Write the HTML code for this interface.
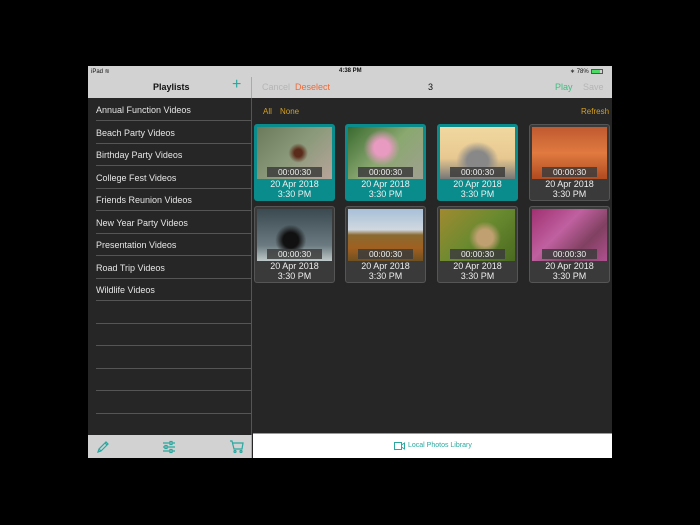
<!DOCTYPE html><html><head><style>
*{margin:0;padding:0;box-sizing:border-box}
body{width:700px;height:525px;background:#000;position:relative;overflow:hidden;font-family:"Liberation Sans",sans-serif}
.a{position:absolute}
.row{position:absolute;left:0;width:164px;height:22.5px;color:#e6e6e6;font-size:9px;padding:7px 0 0 8px}
.sep{position:absolute;left:8px;right:0;height:1px;background:#555}
.tile{position:absolute;width:81px;height:77px;border-radius:3px;border:1px solid #555;background:#3a3a3a}
.tile.s{background:#0a8c8c;border-color:#0a8c8c}
.img{position:absolute;left:2px;top:2px;width:75px;height:52px}
.dur{position:absolute;left:12px;top:42px;width:55px;height:10px;background:rgba(60,60,60,.85);color:#eee;font-size:8.5px;text-align:center;line-height:10px}
.dt{position:absolute;left:0;width:79px;text-align:center;color:#eee;font-size:9px}
</style></head><body>
<div class="a" style="left:88px;top:66px;width:524px;height:392px;background:#262626"></div>
<div class="a" style="left:88px;top:66px;width:524px;height:11px;background:#d2d2d2;font-size:6px;color:#111">
<span class="a" style="left:3px;top:2px">iPad ︎≋</span>
<span class="a" style="left:251px;top:2px;font-weight:bold">4:38 PM</span>
<span class="a" style="left:482px;top:2px">∗ 78%</span>
<span class="a" style="left:503px;top:3px;width:12px;height:5px;border:1px solid #555;"><span class="a" style="left:0;top:0;width:8px;height:3px;background:#4cd964"></span></span>
</div>
<div class="a" style="left:88px;top:77px;width:164px;height:21px;background:#d2d2d2;border-right:1px solid #aaa"></div>
<div class="a" style="left:252px;top:77px;width:360px;height:21px;background:#d2d2d2"></div>
<div class="a" style="left:153px;top:82px;font-size:9px;font-weight:bold;color:#111">Playlists</div>
<div class="a" style="left:232px;top:76px;font-size:16px;color:#2aa8a0">+</div>
<div class="a" style="left:262px;top:82px;font-size:9px;color:#b5b5b5">Cancel</div>
<div class="a" style="left:295px;top:82px;font-size:9px;color:#f06a35">Deselect</div>
<div class="a" style="left:428px;top:82px;font-size:9px;color:#111">3</div>
<div class="a" style="left:555px;top:82px;font-size:9px;color:#3cc080">Play</div>
<div class="a" style="left:583px;top:82px;font-size:9px;color:#b5b5b5">Save</div>
<div class="a" style="left:88px;top:98px;width:164px;height:337px;border-right:1px solid #555">
<div class="row" style="top:0">Annual Function Videos</div>
<div class="row" style="top:22.5px">Beach Party Videos</div>
<div class="row" style="top:45px">Birthday Party Videos</div>
<div class="row" style="top:67.5px">College Fest Videos</div>
<div class="row" style="top:90px">Friends Reunion Videos</div>
<div class="row" style="top:112.5px">New Year Party Videos</div>
<div class="row" style="top:135px">Presentation Videos</div>
<div class="row" style="top:157.5px">Road Trip Videos</div>
<div class="row" style="top:180px">Wildlife Videos</div>
<div class="sep" style="top:22px"></div><div class="sep" style="top:44.5px"></div><div class="sep" style="top:67px"></div><div class="sep" style="top:89.5px"></div><div class="sep" style="top:112px"></div><div class="sep" style="top:134.5px"></div><div class="sep" style="top:157px"></div><div class="sep" style="top:179.5px"></div><div class="sep" style="top:202px"></div><div class="sep" style="top:224.5px"></div><div class="sep" style="top:247px"></div><div class="sep" style="top:269.5px"></div><div class="sep" style="top:292px"></div><div class="sep" style="top:314.5px"></div>
</div>
<div class="a" style="left:88px;top:435px;width:164px;height:23px;background:#d2d2d2;border-right:1px solid #aaa">
<svg class="a" style="left:8px;top:5px" width="14" height="14" viewBox="0 0 14 14" fill="none" stroke="#2aa8a0" stroke-width="1.2"><path d="M2 12l1-3 7-7 2 2-7 7z M9 3l2 2 M3 9l2 2"/></svg>
<svg class="a" style="left:74px;top:5px" width="14" height="14" viewBox="0 0 14 14" fill="none" stroke="#2aa8a0" stroke-width="1.2"><path d="M1 3h12M1 7h12M1 11h12"/><rect x="8" y="1.5" width="2" height="3" fill="#d2d2d2"/><rect x="3" y="5.5" width="2" height="3" fill="#d2d2d2"/><rect x="8" y="9.5" width="2" height="3" fill="#d2d2d2"/></svg>
<svg class="a" style="left:141px;top:4px" width="15" height="15" viewBox="0 0 15 15" fill="none" stroke="#2aa8a0" stroke-width="1.2"><path d="M1 2h2l2 8h8l1-6H4"/><circle cx="6" cy="12.5" r="1"/><circle cx="12" cy="12.5" r="1"/></svg>
</div>
<div class="a" style="left:253px;top:433px;width:359px;height:25px;background:#fff;border-top:1px solid #999"></div>
<svg class="a" style="left:394px;top:442px" width="11" height="8" viewBox="0 0 11 8" fill="none" stroke="#2aa8a0" stroke-width="1"><rect x="0.5" y="0.5" width="7" height="7"/><path d="M7.5 3l3-2v6l-3-2"/></svg>
<div class="a" style="left:408px;top:442px;font-size:7px;color:#2aa8a0">Local Photos Library</div>
<div class="a" style="left:263px;top:107px;font-size:8px;color:#d4a020">All</div>
<div class="a" style="left:280px;top:107px;font-size:8px;color:#d4a020">None</div>
<div class="a" style="left:581px;top:107px;font-size:8px;color:#d4a020">Refresh</div>
<div class="tile s" style="left:254px;top:124px"><div class="img" style="background:radial-gradient(circle at 55% 50%,#5a2a1a 8%,transparent 20%),linear-gradient(135deg,#6b7a5a,#8a9a7a 50%,#b8a49a)"></div><div class="dur">00:00:30</div><div class="dt" style="top:54px">20 Apr 2018</div><div class="dt" style="top:64px">3:30 PM</div></div>
<div class="tile s" style="left:345px;top:124px"><div class="img" style="background:radial-gradient(circle at 45% 40%,#e89ac0 15%,transparent 35%),linear-gradient(135deg,#3a6a30,#8aa870 50%,#a0a090)"></div><div class="dur">00:00:30</div><div class="dt" style="top:54px">20 Apr 2018</div><div class="dt" style="top:64px">3:30 PM</div></div>
<div class="tile s" style="left:437px;top:124px"><div class="img" style="background:radial-gradient(ellipse at 50% 65%,#888 20%,transparent 40%),linear-gradient(180deg,#f0d8a0,#e8c890 60%,#777)"></div><div class="dur">00:00:30</div><div class="dt" style="top:54px">20 Apr 2018</div><div class="dt" style="top:64px">3:30 PM</div></div>
<div class="tile" style="left:529px;top:124px"><div class="img" style="background:linear-gradient(180deg,#c05a30,#e07a40 50%,#b04a20)"></div><div class="dur">00:00:30</div><div class="dt" style="top:54px">20 Apr 2018</div><div class="dt" style="top:64px">3:30 PM</div></div>
<div class="tile" style="left:254px;top:206px"><div class="img" style="background:radial-gradient(circle at 45% 60%,#111 15%,transparent 30%),linear-gradient(180deg,#3a4a50,#6a7a80 70%,#c0c8c8)"></div><div class="dur">00:00:30</div><div class="dt" style="top:54px">20 Apr 2018</div><div class="dt" style="top:64px">3:30 PM</div></div>
<div class="tile" style="left:345px;top:206px"><div class="img" style="background:linear-gradient(180deg,#a8c0d8,#d0d8e0 40%,#8a6a30 50%,#a06020 75%,#705020)"></div><div class="dur">00:00:30</div><div class="dt" style="top:54px">20 Apr 2018</div><div class="dt" style="top:64px">3:30 PM</div></div>
<div class="tile" style="left:437px;top:206px"><div class="img" style="background:radial-gradient(circle at 60% 55%,#c0a070 15%,transparent 30%),linear-gradient(135deg,#a08a30,#6a8a30 50%,#4a6a20)"></div><div class="dur">00:00:30</div><div class="dt" style="top:54px">20 Apr 2018</div><div class="dt" style="top:64px">3:30 PM</div></div>
<div class="tile" style="left:529px;top:206px"><div class="img" style="background:linear-gradient(135deg,#a03070,#c060a0 40%,#804060 70%,#b05090)"></div><div class="dur">00:00:30</div><div class="dt" style="top:54px">20 Apr 2018</div><div class="dt" style="top:64px">3:30 PM</div></div>
</body></html>
